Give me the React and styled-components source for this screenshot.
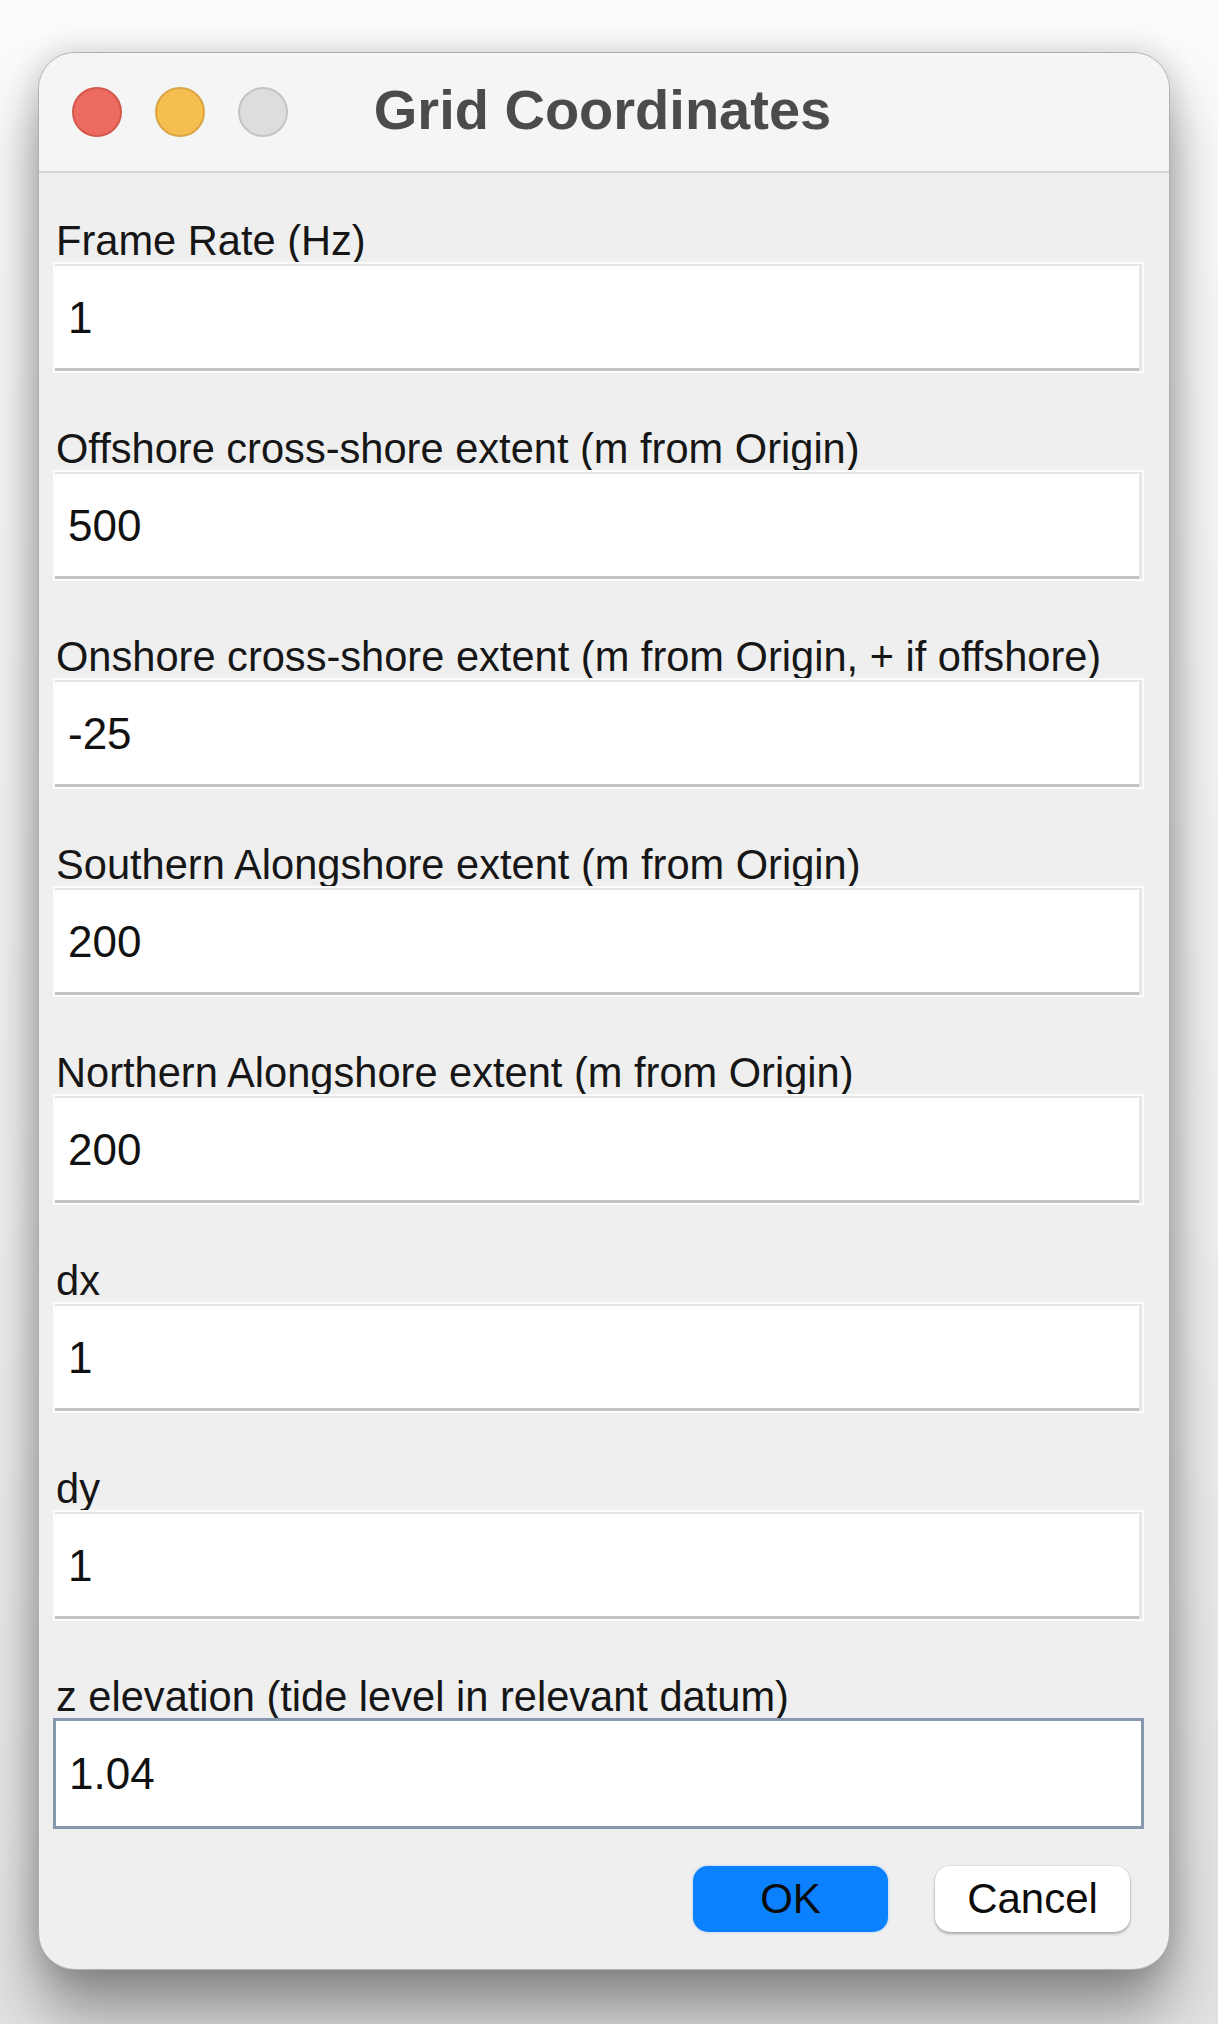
import React from "react";
import styled, { createGlobalStyle } from "styled-components";

const GlobalStyle = createGlobalStyle`
  html, body {
    margin: 0;
    padding: 0;
    background: #ffffff;
  }
  body {
    font-family: "Liberation Sans", Arial, Helvetica, sans-serif;
  }
`;

const Page = styled.div`
  width: 1218px;
  height: 2024px;
  padding: 52px 0 0 38px;
  box-sizing: border-box;
  background: linear-gradient(180deg, #fbfbfb 0%, #f1f1f1 60%, #e2e2e2 100%);
  overflow: hidden;
`;

const Window = styled.div`
  width: 1132px;
  box-sizing: border-box;
  border: 1px solid #b0b0b0;
  border-radius: 37px;
  background: #efefef;
  overflow: hidden;
  box-shadow: 0 42px 60px rgba(0, 0, 0, 0.38), 0 0 30px rgba(0, 0, 0, 0.16);
`;

const TitleBar = styled.div`
  height: 120px;
  display: grid;
  grid-template-columns: 1fr auto 1fr;
  align-items: center;
  background: #f4f5f5;
  border-bottom: 2px solid #d4d4d4;
  padding: 0 36px 4px 33px;
  box-sizing: border-box;
`;

const Lights = styled.div`
  display: flex;
  gap: 33px;
  align-items: center;
  margin-top: 4px;
`;

const Light = styled.span`
  width: 50px;
  height: 50px;
  border-radius: 50%;
  box-sizing: border-box;
  background: ${(p) => p.$fill};
  border: 2px solid ${(p) => p.$edge};
`;

const Title = styled.h1`
  margin: 0;
  font-size: 56px;
  line-height: 60px;
  font-weight: 700;
  color: #4b4b4b;
`;

const Body = styled.div`
  padding: 47px 25px 37px 14px;
  display: flex;
  flex-direction: column;
`;

const Fields = styled.div`
  display: flex;
  flex-direction: column;
  gap: 55px;
`;

const Field = styled.label`
  display: flex;
  flex-direction: column;
`;

const Label = styled.span`
  font-size: 41.6px;
  line-height: 42px;
  height: 42px;
  padding-left: 3px;
  color: #161616;
  white-space: nowrap;
`;

const Input = styled.input`
  display: block;
  width: 100%;
  height: 111px;
  box-sizing: border-box;
  margin: 0;
  padding: 0 0 0 13px;
  font-family: "Liberation Sans", Arial, Helvetica, sans-serif;
  font-size: 44px;
  color: #111111;
  background: #ffffff;
  outline: none;
  border: ${(p) => (p.$focused ? "3px solid #8797ad" : "2px solid #fbfbfb")};
  box-shadow: ${(p) =>
    p.$focused
      ? "none"
      : "inset 0 2px 0 #e5e5e5, inset -3px 0 0 #e7e7e7, inset 0 -3px 0 #c3c3c3"};
`;

const ButtonRow = styled.div`
  display: flex;
  justify-content: flex-end;
  gap: 47px;
  margin-top: 37px;
  padding-right: 14px;
`;

const Button = styled.button`
  width: 195px;
  height: 66px;
  border: none;
  border-radius: 15px;
  font-family: "Liberation Sans", Arial, Helvetica, sans-serif;
  font-size: 42px;
  color: #0c0c0c;
  padding: 0;
  background: ${(p) => (p.$primary ? "#0b81fe" : "#ffffff")};
  box-shadow: ${(p) =>
    p.$primary
      ? "0 0 3px rgba(11, 129, 254, 0.35)"
      : "0 2px 3px rgba(0, 0, 0, 0.28), 0 0 0 1px rgba(0, 0, 0, 0.05)"};
`;

const fields = [
  { label: "Frame Rate (Hz)", value: "1" },
  { label: "Offshore cross-shore extent (m from Origin)", value: "500" },
  { label: "Onshore cross-shore extent (m from Origin, + if offshore)", value: "-25" },
  { label: "Southern Alongshore extent (m from Origin)", value: "200" },
  { label: "Northern Alongshore extent (m from Origin)", value: "200" },
  { label: "dx", value: "1" },
  { label: "dy", value: "1" },
  { label: "z elevation (tide level in relevant datum)", value: "1.04", focused: true },
];

export default function App() {
  return (
    <>
      <GlobalStyle />
      <Page>
        <Window>
          <TitleBar>
            <Lights>
              <Light $fill="#ec6a5f" $edge="#d4574c" />
              <Light $fill="#f5bf4f" $edge="#d9a441" />
              <Light $fill="#dcdddc" $edge="#c3c4c3" />
            </Lights>
            <Title>Grid Coordinates</Title>
            <div />
          </TitleBar>
          <Body>
            <Fields>
              {fields.map((f) => (
                <Field key={f.label}>
                  <Label>{f.label}</Label>
                  <Input defaultValue={f.value} $focused={f.focused} />
                </Field>
              ))}
            </Fields>
            <ButtonRow>
              <Button $primary>OK</Button>
              <Button>Cancel</Button>
            </ButtonRow>
          </Body>
        </Window>
      </Page>
    </>
  );
}
